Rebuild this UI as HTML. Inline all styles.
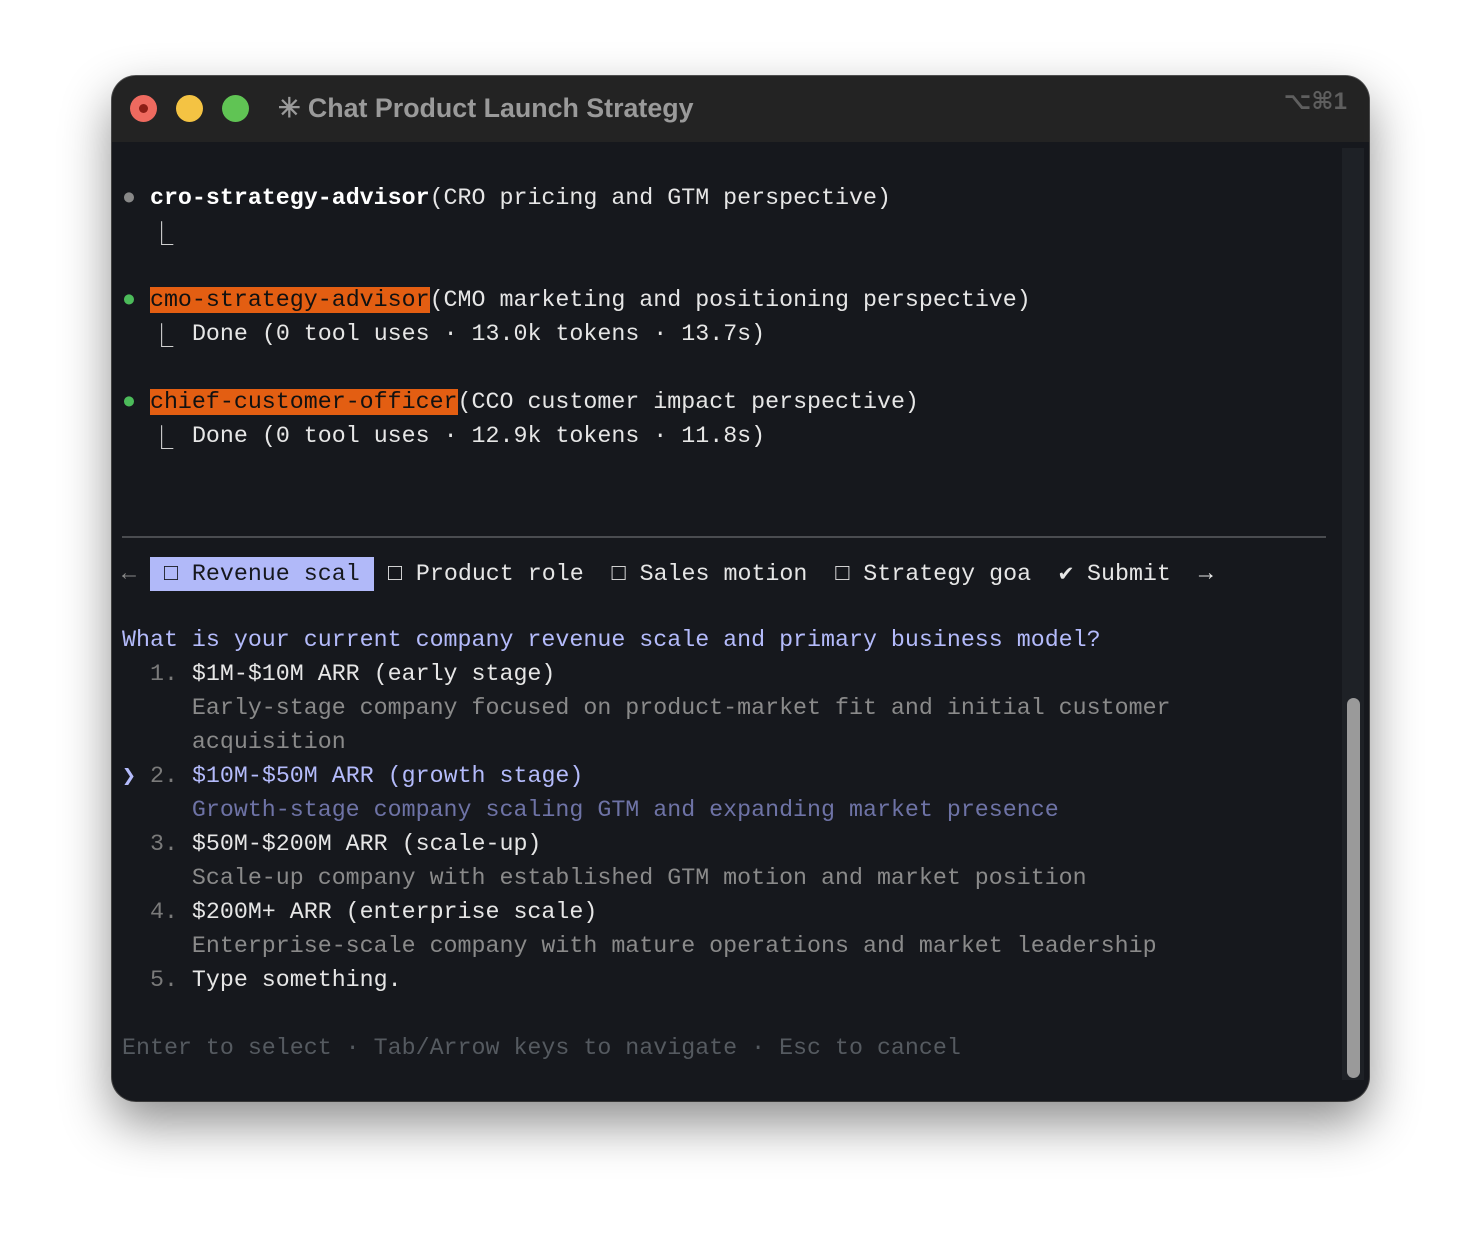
<!DOCTYPE html>
<html><head><meta charset="utf-8"><style>
html,body{margin:0;padding:0;background:#fff;width:1482px;height:1250px;overflow:hidden}
.win{position:absolute;left:112px;top:76px;width:1257px;height:1025px;border-radius:24px;background:#16181d;overflow:hidden;box-shadow:0 22px 50px rgba(0,0,0,.45),0 0 0 1px #555}
.tb{position:absolute;left:0;top:0;width:100%;height:66px;background:#232323}
.dot{position:absolute;top:19px;width:27px;height:27px;border-radius:50%}
.title{position:absolute;left:166px;top:17px;font:bold 26.8px "Liberation Sans",sans-serif;color:#9a9a9a}
.kb{position:absolute;right:22px;top:11px;font:bold 24px "Liberation Sans","DejaVu Sans",sans-serif;color:#5f5f5f}
.l{position:absolute;left:10px;height:34px;line-height:34px;font:23.3px "Liberation Mono",monospace;color:#e6e6e6;white-space:pre;margin-top:5px}
.ib{display:inline-block;height:34px;line-height:34px;vertical-align:top;overflow:visible}
.w{color:#fff;font-weight:bold}
.o{background:#e35e12;color:#111}
.g{color:#8a8a8a}.n{color:#7a7a7a}
.p{color:#b4bbfb}.pd{color:#6e73a6}
.f{color:#555a60}
.hl{background:#b1b9f9;color:#16181d;display:inline-block;height:34px;line-height:34px;vertical-align:top;margin-top:-5px;padding-top:5px;box-sizing:border-box;height:34px}
.sep{position:absolute;left:10px;top:460px;width:1204px;height:2px;background:#4a4c50}
.track{position:absolute;left:1230px;top:72px;width:22px;height:932px;background:#1e2126}
.thumb{position:absolute;left:1235px;top:622px;width:13px;height:380px;border-radius:7px;background:#9a9a9a}
</style></head><body>
<div class="win">
<div class="tb">
<div class="dot" style="left:18px;background:#ee6a5f"><div style="position:absolute;left:9px;top:9px;width:9px;height:9px;border-radius:50%;background:#8c1e16"></div></div>
<div class="dot" style="left:64px;background:#f4c343"></div>
<div class="dot" style="left:110px;background:#60c454"></div>
<div class="title">✳ Chat Product Launch Strategy</div>
<div class="kb">⌥⌘1</div>
</div>
<div class="track"></div><div class="thumb"></div>
<div class="l" style="top:104px"><span style="color:#888">●</span> <span class="w">cro-strategy-advisor</span>(CRO pricing and GTM perspective)</div>
<div class="l" style="top:138px">  <span class="ib" style="width:28px">⎿</span></div>
<div class="l" style="top:206px"><span style="color:#4cbb5a">●</span> <span class="o">cmo-strategy-advisor</span>(CMO marketing and positioning perspective)</div>
<div class="l" style="top:240px">  <span class="ib" style="width:28px">⎿</span> Done (0 tool uses · 13.0k tokens · 13.7s)</div>
<div class="l" style="top:308px"><span style="color:#4cbb5a">●</span> <span class="o">chief-customer-officer</span>(CCO customer impact perspective)</div>
<div class="l" style="top:342px">  <span class="ib" style="width:28px">⎿</span> Done (0 tool uses · 12.9k tokens · 11.8s)</div>
<div class="sep"></div>
<div class="l" style="top:478px"><span class="g">←</span> <span class="hl" style="width:224px;padding-top:0;margin-top:-2px;line-height:34px"> □ Revenue scal </span> □ Product role  □ Sales motion  □ Strategy goa  ✔ Submit  →</div>
<div class="l p" style="top:546px">What is your current company revenue scale and primary business model?</div>
<div class="l" style="top:580px"><span class="n">  1.</span> $1M-$10M ARR (early stage)</div>
<div class="l g" style="top:614px">     Early-stage company focused on product-market fit and initial customer</div>
<div class="l g" style="top:648px">     acquisition</div>
<div class="l" style="top:682px"><span class="p ib" style="width:14px;margin-top:-3px">❯</span> <span class="n">2.</span> <span class="p">$10M-$50M ARR (growth stage)</span></div>
<div class="l pd" style="top:716px">     Growth-stage company scaling GTM and expanding market presence</div>
<div class="l" style="top:750px"><span class="n">  3.</span> $50M-$200M ARR (scale-up)</div>
<div class="l g" style="top:784px">     Scale-up company with established GTM motion and market position</div>
<div class="l" style="top:818px"><span class="n">  4.</span> $200M+ ARR (enterprise scale)</div>
<div class="l g" style="top:852px">     Enterprise-scale company with mature operations and market leadership</div>
<div class="l" style="top:886px"><span class="n">  5.</span> Type something.</div>
<div class="l f" style="top:954px">Enter to select · Tab/Arrow keys to navigate · Esc to cancel</div>
</div>
</body></html>
